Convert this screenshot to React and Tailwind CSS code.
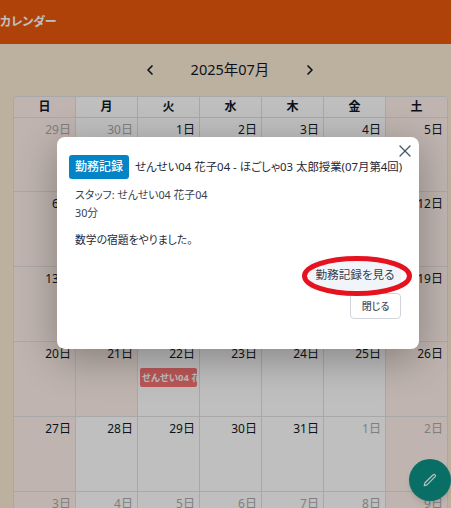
import React from 'react';
import { ChevronLeft, ChevronRight, X } from 'lucide-react';

const fontStack = "font-['Noto_Sans','Noto_Sans_CJK_JP',sans-serif] [font-feature-settings:'palt']";

const weekDays = ['日', '月', '火', '水', '木', '金', '土'];

const weeks = [
  [['29', 1], ['30', 1], ['1'], ['2'], ['3'], ['4'], ['5']],
  [['6'], ['7'], ['8'], ['9'], ['10'], ['11'], ['12']],
  [['13'], ['14'], ['15'], ['16'], ['17'], ['18'], ['19']],
  [['20'], ['21'], ['22'], ['23'], ['24'], ['25'], ['26']],
  [['27'], ['28'], ['29'], ['30'], ['31'], ['1', 1], ['2', 1]],
  [['3', 1], ['4', 1], ['5', 1], ['6', 1], ['7', 1], ['8', 1], ['9', 1]],
];

function DayCell({ day, muted, index, pink, event, first }) {
  const weekend = index === 0 || index === 6;
  return (
    <div
      className={`border-r border-b border-[#e0e0e0] pt-[3px] pr-[4px] pl-[3px] ${first ? 'h-[74px]' : 'h-[75px]'} ${
        weekend || pink ? 'bg-[#fff1ea]' : 'bg-white'
      }`}
    >
      <p className={`text-right text-[12px] leading-[18px] ${muted ? 'text-[#aaaaaa]' : 'text-[#111827]'}`}>
        {day}日
      </p>
      {event && (
        <div className="mt-[5px] -mr-[2px] -ml-[1px] h-[19px] overflow-hidden rounded-[2px] bg-[#f97474] px-[2px] text-[9.5px] leading-[19px] font-bold whitespace-nowrap text-white">
          せんせい04 花子04
        </div>
      )}
    </div>
  );
}

export default function App() {
  return (
    <div className={`relative h-[508px] w-[451px] overflow-hidden bg-[#fbebd3] ${fontStack}`}>
      <header className="flex h-[44px] items-center bg-[#ea580c]">
        <h1 className="text-[12px] font-bold whitespace-nowrap text-white">カレンダー</h1>
      </header>

      <div className="flex h-[52px] items-center justify-center pl-[9px]">
        <button className="flex w-[20px] justify-center text-[#111827]">
          <ChevronLeft size={16} strokeWidth={2.5} />
        </button>
        <span className="mx-[28px] w-[84px] text-center text-[14.5px] whitespace-nowrap text-[#111827]">2025年07月</span>
        <button className="flex w-[20px] justify-center text-[#111827]">
          <ChevronRight size={16} strokeWidth={2.5} />
        </button>
      </div>

      <div className="ml-[13px] w-[435px] overflow-hidden rounded-t-[4px] border-t border-l border-[#e0e0e0]">
        <div className="grid grid-cols-7">
          {weekDays.map((d, i) => (
            <div
              key={d}
              className={`h-[21px] border-r border-b border-[#e0e0e0] text-center text-[12px] leading-[20px] font-bold text-[#111827] ${
                i === 0 || i === 6 ? 'bg-[#fff1ea]' : 'bg-white'
              }`}
            >
              {d}
            </div>
          ))}
        </div>
        <div className="grid grid-cols-7">
          {weeks.map((week, w) =>
            week.map(([day, muted], i) => (
              <DayCell
                key={`${w}-${i}`}
                day={day}
                muted={muted}
                index={i}
                first={w === 0}
                pink={w === 3 && i === 1}
                event={w === 3 && i === 2}
              />
            ))
          )}
        </div>
      </div>

      <button className="absolute right-0 bottom-[7px] z-10 flex h-[42px] w-[42px] items-center justify-center rounded-full bg-[#0d9488] text-white shadow-md">
        <svg width="16" height="16" viewBox="0 0 16 16" fill="none" stroke="currentColor" strokeWidth="1.2" strokeLinejoin="round">
          <path d="M11.2 2.8a1.3 1.3 0 0 1 1.9 1.9L5 12.8l-2.8.8.8-2.8z" />
        </svg>
      </button>

      {/* overlay + modal */}
      <div className="absolute inset-0 z-20 bg-black/25">
        <div className="absolute top-[137px] left-[57px] h-[212px] w-[362px] rounded-[8px] bg-white shadow-[0_10px_40px_rgba(0,0,0,0.3)]">
          <button className="absolute top-[4px] right-[4px] text-[#475569]">
            <X size={20} strokeWidth={1.5} />
          </button>

          <div className="flex items-center px-[12px] pt-[18px]">
            <span className="shrink-0 rounded-[3px] bg-[#0284c7] px-[6px] text-[12px] leading-[24px] font-medium whitespace-nowrap text-white">
              勤務記録
            </span>
            <span className="ml-[6px] text-[11.4px] whitespace-nowrap text-[#1f2937]">
              せんせい04 花子04 - ほごしゃ03 太郎授業(07月第4回)
            </span>
          </div>

          <div className="px-[18px] pt-[7px] text-[10.8px] leading-[18px] text-[#374151]">
            <p>スタッフ: せんせい04 花子04</p>
            <p>30分</p>
            <p className="mt-[9px] text-[#1f2937]">数学の宿題をやりました。</p>
          </div>

          <div className="flex flex-col items-end pt-[11px] pr-[18px]">
            <button className="relative h-[30px] w-[92px] rounded-[4px] bg-[#f1f5f9] text-[11.6px] whitespace-nowrap text-[#374151]">
              勤務記録を見る
              <svg className="absolute -top-[4px] -left-[7px]" width="110" height="40" viewBox="0 0 110 40" fill="none">
                <ellipse cx="55" cy="20" rx="52.5" ry="17.5" stroke="#e5121f" strokeWidth="5" />
              </svg>
            </button>
            <button className="mt-[3px] h-[26px] w-[51px] rounded-[4px] border border-[#d1d5db] bg-white text-[10px] font-medium text-[#4b5563]">
              閉じる
            </button>
          </div>
        </div>
      </div>
    </div>
  );
}
